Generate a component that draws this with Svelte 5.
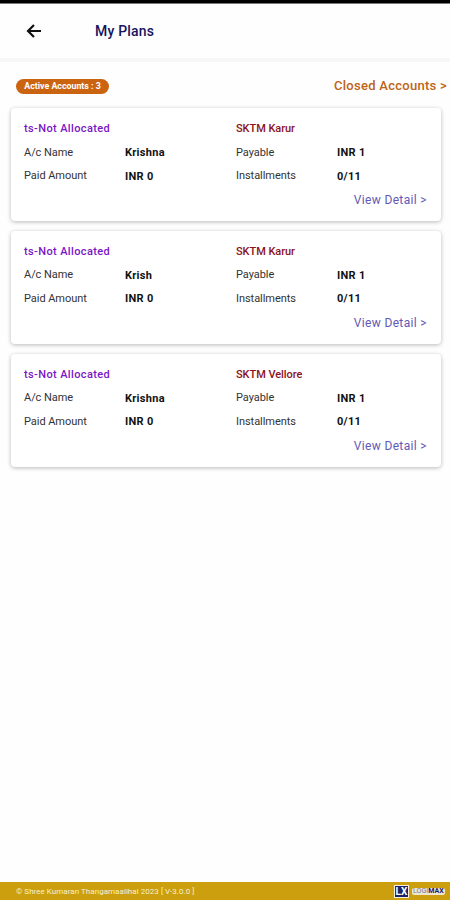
<script lang="ts">
  interface Plan {
    group:        string;
    branch:       string;
    name:         string;
    paid:         string;
    payable:      string;
    installments: string;
  }

  const plans: Plan[] = [
    { group: 'ts-Not Allocated', branch: 'SKTM Karur',   name: 'Krishna', paid: 'INR 0', payable: 'INR 1', installments: '0/11' },
    { group: 'ts-Not Allocated', branch: 'SKTM Karur',   name: 'Krish',   paid: 'INR 0', payable: 'INR 1', installments: '0/11' },
    { group: 'ts-Not Allocated', branch: 'SKTM Vellore', name: 'Krishna', paid: 'INR 0', payable: 'INR 1', installments: '0/11' },
  ];
</script>

<div class="screen">
  <div class="statusbar"></div>

  <header>
    <button class="back" aria-label="Back">
      <svg width="16" height="14" viewBox="0 0 16 14" fill="none" stroke="#111" stroke-width="2.2">
        <path d="M15 7H2M8 1L2 7l6 6" />
      </svg>
    </button>
    <h1>My Plans</h1>
  </header>

  <div class="summary">
    <span class="badge">Active Accounts : {plans.length}</span>
    <span class="closed">Closed Accounts &gt;</span>
  </div>

  <main>
    {#each plans as plan}
      <section class="card">
        <div class="grid">
          <span class="group">{plan.group}</span>
          <span class="branch">{plan.branch}</span>

          <span>A/c Name</span>
          <b>{plan.name}</b>
          <span>Payable</span>
          <b>{plan.payable}</b>

          <span>Paid Amount</span>
          <b>{plan.paid}</b>
          <span>Installments</span>
          <b>{plan.installments}</b>
        </div>
        <div class="detail">View Detail &gt;</div>
      </section>
    {/each}
  </main>

  <footer>
    <span>© Shree Kumaran Thangamaalihai 2023 [ V-3.0.0 ]</span>
    <div class="logo">
      <span class="mark">LX</span>
      <span class="word">LOGI<b>MAX</b></span>
    </div>
  </footer>
</div>

<style>
  :global(body) { background: #fefefe; }

  .screen {
    height:         900px;
    display:        flex;
    flex-direction: column;
    font-family:    Roboto, sans-serif;
    background:     #fefefe;
    overflow:       hidden;
  }

  .statusbar {
    height:        3px;
    flex:          none;
    background:    #000;
    border-bottom: 1px solid #777;
  }

  header {
    height:        54px;
    flex:          none;
    display:       flex;
    align-items:   center;
    border-bottom: 4px solid #f7f7f7;
  }

  .back {
    display:    flex;
    width:      95px;
    padding:    0 0 0 26px;
    border:     0;
    background: none;
  }

  h1 {
    margin:         0;
    font-size:      14px;
    font-weight:    500;
    letter-spacing: .2px;
    color:          #17135f;
  }

  .summary {
    height:          46px;
    flex:            none;
    display:         flex;
    align-items:     center;
    justify-content: space-between;
    padding:         1px 3px 0 16px;
    box-sizing:      border-box;
  }

  .badge {
    width:         93px;
    height:        15px;
    margin-top:    1px;
    border-radius: 8px;
    background:    #cb6410;
    color:         #fff;
    font-size:     8.8px;
    font-weight:   700;
    line-height:   14px;
    text-align:    center;
    white-space:   nowrap;
  }

  .closed {
    font-size:      13px;
    font-weight:    500;
    letter-spacing: .27px;
    color:          #bd6416;
  }

  main {
    flex:           1;
    display:        flex;
    flex-direction: column;
    gap:            9.75px;
    padding:        0 9px 0 11px;
  }

  .card {
    height:        113px;
    padding:       9px 14px 0 13px;
    box-sizing:    border-box;
    border-radius: 4px;
    background:    #fff;
    box-shadow:    0 1px 4px rgba(0, 0, 0, .28);
  }

  .grid {
    display:               grid;
    grid-template-columns: 101px 111px 101px 1fr;
    grid-template-rows:    23.5px 23px 24px;
    align-items:           center;
    font-size:             11px;
    letter-spacing:        -.05px;
    white-space:           nowrap;
    color:                 #333;
  }

  .grid b {
    padding-top:    1px;
    font-weight:    700;
    letter-spacing: .3px;
    color:          #111;
  }

  .group, .branch { grid-column: span 2; }
  .group  { font-weight: 500; letter-spacing: .38px; color: #7a16c5; }
  .branch { font-weight: 500; color: #8b1220; }

  .detail {
    margin-top:     1.5px;
    font-size:      12px;
    line-height:    22px;
    letter-spacing: .35px;
    text-align:     right;
    color:          #6259b5;
  }

  footer {
    height:          18px;
    flex:            none;
    display:         flex;
    align-items:     center;
    justify-content: space-between;
    padding:         1px 4px 0 16px;
    box-sizing:      border-box;
    background:      #cb9f0e;
    color:           #f8f0cf;
    font-size:       8px;
    letter-spacing:  .04px;
  }

  .logo {
    display:     flex;
    align-items: center;
    gap:         3px;
    width:       52px;
    height:      13px;
  }

  .mark {
    width:       15px;
    height:      13px;
    border:      1px solid #f5f0e0;
    box-sizing:  border-box;
    background:  #1d2268;
    color:       #fff;
    font-size:   10px;
    font-weight: 700;
    line-height: 11px;
    text-align:  center;
  }

  .word {
    padding:       0 1px;
    border-radius: 2px;
    background:    #eee6cf;
    color:         #77769a;
    font-size:     7px;
    line-height:   7px;
  }

  .word b { color: #1d2268; }
</style>
